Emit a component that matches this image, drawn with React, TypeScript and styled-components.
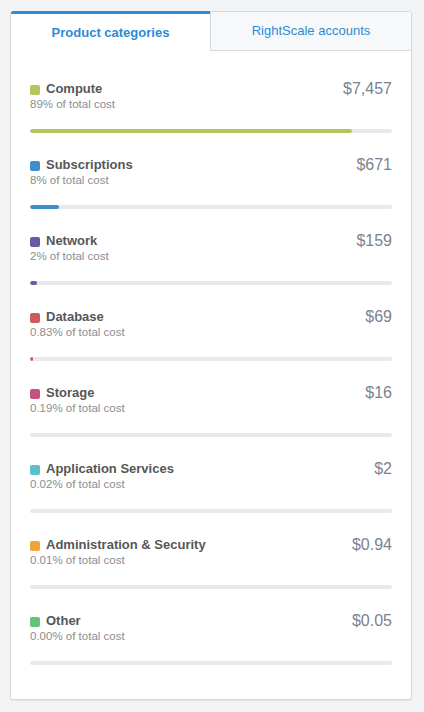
import React from "react";
import styled, { createGlobalStyle } from "styled-components";

const GlobalStyle = createGlobalStyle`
  html, body { margin: 0; padding: 0; background: #f2f3f5; }
  body { font-family: "Liberation Sans", Arial, Helvetica, sans-serif; }
  * { box-sizing: border-box; }
`;

const Page = styled.div`
  padding: 11px 12px 12px 10px;
  background: #f2f3f5;
`;

const Card = styled.div`
  background: #ffffff;
  border: 1px solid #d6d9dc;
  border-top: none;
  border-radius: 3px;
  box-shadow: 0 1px 1px rgba(0, 0, 0, 0.06);
  overflow: hidden;
`;

const Tabs = styled.div`
  display: grid;
  grid-template-columns: 199px 1fr;
  height: 40px;
`;

const Tab = styled.div<{ $active?: boolean }>`
  display: flex;
  align-items: center;
  justify-content: center;
  font-size: 13px;
  color: #2d8ad6;
  font-weight: ${(p) => (p.$active ? 700 : 400)};
  background: ${(p) => (p.$active ? "#ffffff" : "#f7f8f9")};
  border-top: ${(p) => (p.$active ? "3px solid #3189d6" : "1px solid #d6d9dc")};
  border-left: ${(p) => (p.$active ? "none" : "1px solid #d6d9dc")};
  border-bottom: ${(p) => (p.$active ? "none" : "1px solid #d6d9dc")};
  padding-bottom: 1px;
`;

const List = styled.div`
  display: flex;
  flex-direction: column;
  gap: 24px;
  padding: 30px 19px 34px 19px;
`;

const Row = styled.div`
  display: flex;
  flex-direction: column;
`;

const Header = styled.div`
  display: flex;
  justify-content: space-between;
  align-items: flex-start;
`;

const Labels = styled.div`
  display: flex;
  flex-direction: column;
`;

const TitleLine = styled.div`
  display: flex;
  align-items: center;
  gap: 6px;
  height: 16px;
`;

const Swatch = styled.span<{ $color: string }>`
  width: 10px;
  height: 10px;
  border-radius: 2px;
  background: ${(p) => p.$color};
  margin-top: 1px;
`;

const Title = styled.span`
  font-size: 13px;
  font-weight: 700;
  line-height: 16px;
  color: #555759;
`;

const Sub = styled.div`
  font-size: 11.5px;
  line-height: 14px;
  color: #8b8d90;
`;

const Amount = styled.div`
  font-size: 16px;
  line-height: 16px;
  color: #7b8290;
`;

const Track = styled.div`
  margin-top: 18px;
  height: 4px;
  border-radius: 2px;
  background: #e8e9eb;
  overflow: hidden;
`;

const Fill = styled.div<{ $color: string }>`
  height: 100%;
  border-radius: 2px;
  background: ${(p) => p.$color};
`;

const items = [
  { name: "Compute", pct: "89%", amount: "$7,457", color: "#b5c55b", w: 88.9 },
  { name: "Subscriptions", pct: "8%", amount: "$671", color: "#3d8ec9", w: 8 },
  { name: "Network", pct: "2%", amount: "$159", color: "#6a5aa6", w: 2 },
  { name: "Database", pct: "0.83%", amount: "$69", color: "#d05a5e", w: 0.83 },
  { name: "Storage", pct: "0.19%", amount: "$16", color: "#c6537a", w: 0 },
  { name: "Application Services", pct: "0.02%", amount: "$2", color: "#5bbfcc", w: 0 },
  { name: "Administration & Security", pct: "0.01%", amount: "$0.94", color: "#f0a43a", w: 0 },
  { name: "Other", pct: "0.00%", amount: "$0.05", color: "#5ec47e", w: 0 },
];

export default function App() {
  return (
    <>
      <GlobalStyle />
      <Page>
        <Card>
          <Tabs>
            <Tab $active>Product categories</Tab>
            <Tab>RightScale accounts</Tab>
          </Tabs>
          <List>
            {items.map((it) => (
              <Row key={it.name}>
                <Header>
                  <Labels>
                    <TitleLine>
                      <Swatch $color={it.color} />
                      <Title>{it.name}</Title>
                    </TitleLine>
                    <Sub>{it.pct} of total cost</Sub>
                  </Labels>
                  <Amount>{it.amount}</Amount>
                </Header>
                <Track>
                  <Fill $color={it.color} style={{ width: `${it.w}%` }} />
                </Track>
              </Row>
            ))}
          </List>
        </Card>
      </Page>
    </>
  );
}
